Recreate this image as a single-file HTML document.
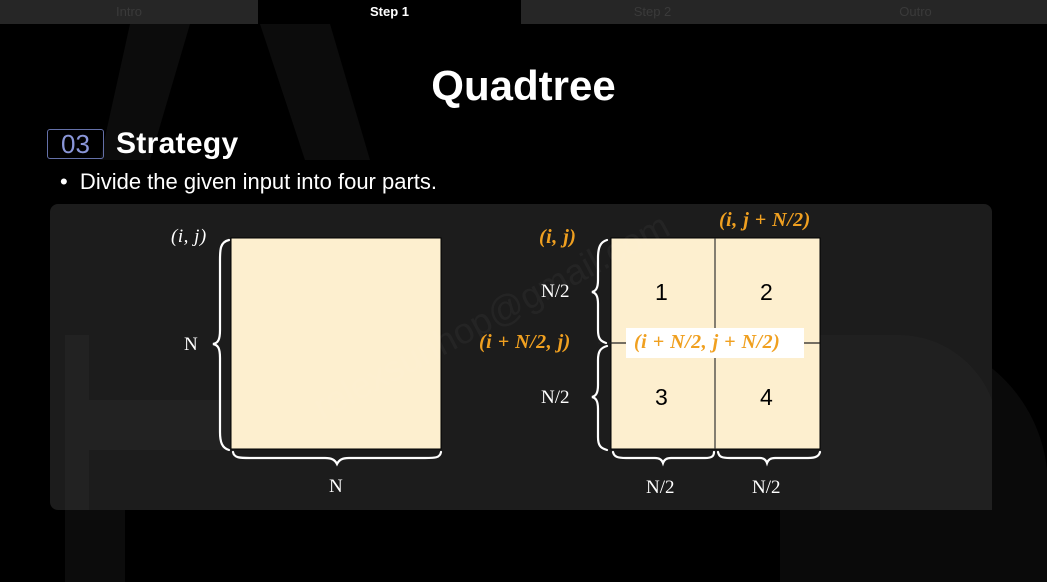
<!DOCTYPE html>
<html><head><meta charset="utf-8"><style>
*{margin:0;padding:0;box-sizing:border-box}
body{width:1047px;height:582px;background:#000;position:relative;overflow:hidden;font-family:"Liberation Sans",sans-serif;color:#fff}
.tab{position:absolute;top:0;height:24px;line-height:24px;text-align:center;font-size:13px;color:#3a3a3a;background:#262626}
.m{font-family:"Liberation Serif",serif;font-style:italic;position:absolute;white-space:nowrap;letter-spacing:0.5px}
.n{font-family:"Liberation Serif",serif;position:absolute;font-size:19px;color:#fff}
.o{color:#f0a020;font-weight:bold}
</style></head><body>
<svg style="position:absolute;left:0;top:0" width="1047" height="582">
<polygon points="130,24 190,24 150,160 100,160" fill="#0c0c0c"/>
<polygon points="260,24 330,24 370,160 305,160" fill="#0c0c0c"/>
<rect x="65" y="335" width="60" height="247" fill="#0c0c0c"/>
<path d="M780 335 H900 A150 150 0 0 1 1047 470 V582 H780 Z" fill="#0a0a0a"/>
<rect x="50" y="204" width="942" height="306" rx="8" fill="#1c1c1c"/>
<rect x="65" y="335" width="24" height="175" fill="#222"/>
<rect x="65" y="400" width="170" height="50" fill="#222"/>
<path d="M820 335 H900 A100 100 0 0 1 992 400 V510 H820 Z" fill="#202020"/>
<rect x="231" y="238" width="210" height="211" fill="#fdefcf" stroke="#000" stroke-width="1"/>
<rect x="611" y="238" width="209" height="211" fill="#fdefcf" stroke="#000" stroke-width="1"/>
<line x1="715" y1="238" x2="715" y2="449" stroke="#333" stroke-width="1.2"/>
<line x1="598" y1="343" x2="820" y2="343" stroke="#222" stroke-width="1.2"/>
<g fill="none" stroke="#fff" stroke-width="2.2" stroke-linecap="round">
<path d="M229 240 C220 242 220 250 220 260 V330 C220 340 218 343 213 344 C218 345 220 348 220 358 V432 C220 442 222 448 229 450"/>
<path d="M233 452 C234 458 240 458 250 458 H325 C332 458 335 460 337 464 C339 460 342 458 349 458 H425 C435 458 440 458 441 452"/>
<path d="M607 240 C600 242 598 248 598 258 V280 C598 288 596 291 592 292 C596 293 598 296 598 304 V330 C598 338 600 341 606 343"/>
<path d="M607 346 C600 348 598 352 598 360 V385 C598 393 596 396 592 397 C596 398 598 401 598 409 V437 C598 445 600 448 607 450"/>
<path d="M613 452 C614 457 618 458 626 458 H655 C660 458 662 460 663 463 C664 460 666 458 671 458 H705 C712 458 714 456 714 452"/>
<path d="M718 452 C719 457 722 458 730 458 H760 C764 458 766 460 767 463 C768 460 770 458 775 458 H808 C816 458 819 456 820 452"/>
</g>
<rect x="626" y="328" width="178" height="30" fill="#fff"/>
<text x="322" y="420" font-size="36" fill="#ffffff" fill-opacity="0.04" transform="rotate(-28 322 420)" font-family="Liberation Sans">relexsunhop@gmail.com</text>
</svg>
<div class="tab" style="left:0;width:258px">Intro</div>
<div class="tab" style="left:258px;width:263px;background:#000;color:#fff;font-weight:bold">Step 1</div>
<div class="tab" style="left:521px;width:263px">Step 2</div>
<div class="tab" style="left:784px;width:263px">Outro</div>
<div style="position:absolute;left:0;width:1047px;top:62px;text-align:center;font-size:42px;font-weight:bold">Quadtree</div>
<div style="position:absolute;left:47px;top:129px;width:57px;height:30px;border:1.5px solid #6470a8;border-radius:3px;color:#8a96d8;font-size:26px;line-height:28px;text-align:center">03</div>
<div style="position:absolute;left:116px;top:127px;font-size:30px;font-weight:bold;letter-spacing:0.3px">Strategy</div>
<div style="position:absolute;left:60px;top:169px;font-size:22px">•&nbsp; Divide the given input into four parts.</div>
<div class="m" style="left:171px;top:226px;font-size:19px">(i, j)</div>
<div class="n" style="left:184px;top:334px">N</div>
<div class="n" style="left:329px;top:476px">N</div>
<div class="m o" style="left:539px;top:226px;font-size:20px">(i, j)</div>
<div class="m o" style="left:719px;top:209px;font-size:20px">(i, j + N/2)</div>
<div class="m o" style="left:479px;top:331px;font-size:20px">(i + N/2, j)</div>
<div class="m o" style="left:634px;top:331px;font-size:20px">(i + N/2, j + N/2)</div>
<div class="n" style="left:541px;top:281px">N/2</div>
<div class="n" style="left:541px;top:387px">N/2</div>
<div class="n" style="left:646px;top:477px">N/2</div>
<div class="n" style="left:752px;top:477px">N/2</div>
<div style="position:absolute;left:655px;top:279px;font-size:23px;color:#000">1</div>
<div style="position:absolute;left:760px;top:279px;font-size:23px;color:#000">2</div>
<div style="position:absolute;left:655px;top:384px;font-size:23px;color:#000">3</div>
<div style="position:absolute;left:760px;top:384px;font-size:23px;color:#000">4</div>
</body></html>
